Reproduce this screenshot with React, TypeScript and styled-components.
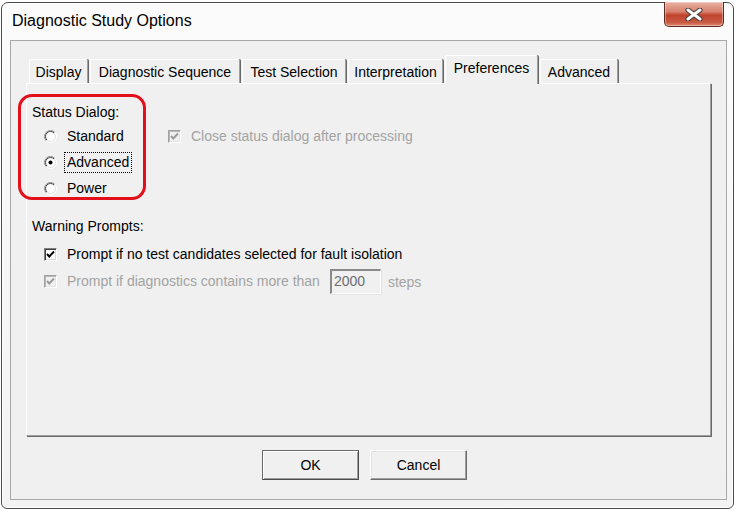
import React from "react";
import styled, { createGlobalStyle } from "styled-components";

const GlobalStyle = createGlobalStyle`
  html, body {
    margin: 0;
    padding: 0;
    background: #ffffff;
  }
  body {
    font-family: "Liberation Sans", Arial, sans-serif;
    font-size: 14px;
    color: #000;
  }
`;

const Page = styled.div`
  width: 736px;
  height: 510px;
  padding: 2px 0 0 1px;
  box-sizing: border-box;
`;

const Window = styled.div`
  position: relative;
  width: 733px;
  height: 507px;
  box-sizing: border-box;
  border: 1px solid #4a4a4a;
  border-radius: 7px 7px 6px 6px;
  background: linear-gradient(#fbfbfb, #f3f3f3);
  box-shadow: inset 0 0 0 1px #ffffff;
  padding: 0 6px 8px 8px;
  display: flex;
  flex-direction: column;
`;

const TitleBar = styled.div`
  height: 37px;
  display: flex;
  align-items: flex-start;
  justify-content: space-between;
`;

const Title = styled.div`
  font-family: "Liberation Sans", Arial, sans-serif;
  font-size: 16px;
  line-height: 20px;
  margin-top: 8px;
  margin-left: 2px;
  color: #000;
`;

const CloseButton = styled.div`
  width: 60px;
  height: 25px;
  margin-top: -1px;
  margin-right: 3px;
  box-sizing: border-box;
  border: 1px solid #5e2a22;
  border-top: none;
  border-radius: 0 0 5px 5px;
  background: linear-gradient(#eab1a3 0%, #d8816e 40%, #c0432c 55%, #c85a44 85%, #dd8a72 100%);
  box-shadow: inset 0 0 0 1px rgba(255, 255, 255, 0.35);
  display: flex;
  align-items: center;
  justify-content: center;
`;

const Client = styled.div`
  flex: 1;
  border: 1px solid #a8a8a8;
  background: #f0f0f0;
  padding: 15px 14px 17px 15px;
  display: flex;
  flex-direction: column;
`;

const TabStrip = styled.div`
  height: 28px;
  display: flex;
  align-items: flex-end;
  padding-left: 3px;
  position: relative;
  z-index: 1;
  margin-bottom: -1px;
`;

const Tab = styled.div<{ $active?: boolean; $width: number }>`
  box-sizing: border-box;
  width: ${(p) => p.$width}px;
  height: ${(p) => (p.$active ? "29px" : "24px")};
  padding-bottom: ${(p) => (p.$active ? "4px" : "0")};
  margin: ${(p) => (p.$active ? "0 2px 0 0" : "0 2px 1px 0")};
  display: flex;
  align-items: center;
  justify-content: center;
  background: #f0f0f0;
  border-top: 1px solid #ffffff;
  border-left: 1px solid #ffffff;
  border-right: 1px solid #a0a0a0;
  box-shadow: 1px 0 0 #696969;
  border-radius: 2px 2px 0 0;
  white-space: nowrap;
  font-size: 14px;
  color: #000;
`;

const Panel = styled.div`
  position: relative;
  height: 353px;
  box-sizing: border-box;
  border-top: 1px solid #ffffff;
  border-left: 1px solid #ffffff;
  border-right: 1px solid #a0a0a0;
  border-bottom: 1px solid #a0a0a0;
  box-shadow: 1px 1px 0 #696969;
  margin-right: 1px;
  padding: 18px 0 0 5px;
`;

const Annotation = styled.div`
  position: absolute;
  left: -9px;
  top: 10px;
  width: 128px;
  height: 106px;
  box-sizing: border-box;
  border: 3px solid #e3101a;
  border-radius: 14px;
  pointer-events: none;
`;

const TopSection = styled.div`
  display: flex;
`;

const GroupColumn = styled.div<{ $width?: number }>`
  display: flex;
  flex-direction: column;
  width: ${(p) => (p.$width ? `${p.$width}px` : "auto")};
`;

const GroupLabel = styled.div<{ $gap?: number; $after?: number }>`
  height: 20px;
  line-height: 20px;
  margin-top: ${(p) => p.$gap ?? 0}px;
  margin-bottom: ${(p) => p.$after ?? 1}px;
  color: #000;
`;

const OptionRow = styled.div<{ $disabled?: boolean; $indent?: number; $h?: number }>`
  height: ${(p) => p.$h ?? 26}px;
  display: flex;
  align-items: center;
  padding-left: ${(p) => p.$indent ?? 0}px;
  color: ${(p) => (p.$disabled ? "#a3a3a3" : "#000")};
  white-space: nowrap;
`;

const OptionText = styled.span<{ $focused?: boolean }>`
  margin-left: 8px;
  padding: 0 2px;
  line-height: 19px;
  outline: ${(p) => (p.$focused ? "1px dotted #000" : "none")};
  outline-offset: 0;
`;

const Spacer = styled.div<{ $h: number }>`
  height: ${(p) => p.$h}px;
`;

const CheckBoxBox = styled.span<{ $disabled?: boolean }>`
  width: 13px;
  height: 13px;
  box-sizing: border-box;
  flex: none;
  margin-left: 2px;
  border-style: solid;
  border-width: 1px;
  border-color: ${(p) =>
    p.$disabled ? "#a0a0a0 #ffffff #ffffff #a0a0a0" : "#808080 #ffffff #ffffff #808080"};
  box-shadow: ${(p) =>
    p.$disabled
      ? "inset 1px 1px 0 #b8b8b8, inset -1px -1px 0 #e4e4e4"
      : "inset 1px 1px 0 #404040, inset -1px -1px 0 #d8d8d8"};
  background: ${(p) => (p.$disabled ? "#f0f0f0" : "#ffffff")};
  display: flex;
  align-items: center;
  justify-content: center;
`;

const NumberBox = styled.div`
  width: 51px;
  height: 25px;
  box-sizing: border-box;
  margin: 0 7px 0 8px;
  border-style: solid;
  border-width: 2px 1px 1px 2px;
  border-color: #8a8a8a #ffffff #ffffff #8a8a8a;
  box-shadow: 1px 1px 0 #e3e3e3;
  background: #f0f0f0;
  color: #6d6d6d;
  padding-left: 2px;
  line-height: 21px;
  font-size: 14px;
`;

const ButtonRow = styled.div`
  margin-top: 14px;
  display: flex;
  justify-content: center;
  gap: 11px;
  padding-right: 9px;
`;

const Button = styled.div<{ $default?: boolean }>`
  width: 97px;
  height: 30px;
  box-sizing: border-box;
  display: flex;
  align-items: center;
  justify-content: center;
  font-size: 14px;
  color: #000;
  background: #f0f0f0;
  border-style: solid;
  border-width: 1px;
  border-color: ${(p) =>
    p.$default ? "#6a6a6a #4a4a4a #4a4a4a #6a6a6a" : "#ffffff #6a6a6a #6a6a6a #ffffff"};
  box-shadow: ${(p) =>
    p.$default
      ? "inset 1px 1px 0 #ffffff, inset -1px -1px 0 #a0a0a0"
      : "inset -1px -1px 0 #a0a0a0, inset 1px 1px 0 #e3e3e3"};
`;

const Radio: React.FC<{ checked?: boolean }> = ({ checked }) => (
  <svg width="13" height="13" viewBox="0 0 13 13" style={{ flex: "none" }}>
    <defs>
      <linearGradient id="ro" x1="0" y1="0" x2="1" y2="1">
        <stop offset="0.45" stopColor="#8a8a8a" />
        <stop offset="0.55" stopColor="#ffffff" />
      </linearGradient>
      <linearGradient id="ri" x1="0" y1="0" x2="1" y2="1">
        <stop offset="0.45" stopColor="#404040" />
        <stop offset="0.55" stopColor="#dcdcdc" />
      </linearGradient>
    </defs>
    <circle cx="6.5" cy="6.5" r="6" fill="#ffffff" stroke="url(#ro)" strokeWidth="1" />
    <circle cx="6.5" cy="6.5" r="5" fill="#ffffff" stroke="url(#ri)" strokeWidth="1" />
    {checked && <circle cx="6.5" cy="6.5" r="2" fill="#000" />}
  </svg>
);

const CheckBox: React.FC<{ disabled?: boolean }> = ({ disabled }) => (
  <CheckBoxBox $disabled={disabled}>
    <svg width="9" height="9" viewBox="0 0 9 9">
      <path
        d="M1 4 L3.3 6.5 L8 1.5"
        fill="none"
        stroke={disabled ? "#9a9a9a" : "#000"}
        strokeWidth="1.9"
      />
    </svg>
  </CheckBoxBox>
);

const CloseGlyph: React.FC = () => (
  <svg width="20" height="13" viewBox="0 0 20 13">
    <path d="M4 2 L16 11 M16 2 L4 11" stroke="#3a3a3a" strokeWidth="5" strokeLinecap="round" />
    <path d="M4 2 L16 11 M16 2 L4 11" stroke="#ffffff" strokeWidth="3" strokeLinecap="round" />
  </svg>
);

const tabs = [
  { label: "Display", width: 59 },
  { label: "Diagnostic Sequence", width: 150 },
  { label: "Test Selection", width: 104 },
  { label: "Interpretation", width: 95 },
  { label: "Preferences", width: 93 },
  { label: "Advanced", width: 78 },
];

export default function App() {
  return (
    <Page>
      <GlobalStyle />
      <Window>
        <TitleBar>
          <Title>Diagnostic Study Options</Title>
          <CloseButton>
            <CloseGlyph />
          </CloseButton>
        </TitleBar>
        <Client>
          <TabStrip>
            {tabs.map((t) => (
              <Tab key={t.label} $width={t.width} $active={t.label === "Preferences"}>
                {t.label}
              </Tab>
            ))}
          </TabStrip>
          <Panel>
            <TopSection>
              <GroupColumn $width={134}>
                <GroupLabel>Status Dialog:</GroupLabel>
                <OptionRow $indent={12}>
                  <Radio />
                  <OptionText>Standard</OptionText>
                </OptionRow>
                <OptionRow $indent={12}>
                  <Radio checked />
                  <OptionText $focused>Advanced</OptionText>
                </OptionRow>
                <OptionRow $indent={12}>
                  <Radio />
                  <OptionText>Power</OptionText>
                </OptionRow>
              </GroupColumn>
              <GroupColumn>
                <Spacer $h={21} />
                <OptionRow $disabled>
                  <CheckBox disabled />
                  <OptionText>Close status dialog after processing</OptionText>
                </OptionRow>
              </GroupColumn>
            </TopSection>
            <GroupLabel $gap={15} $after={5}>Warning Prompts:</GroupLabel>
            <OptionRow $indent={10} $h={27}>
              <CheckBox />
              <OptionText>Prompt if no test candidates selected for fault isolation</OptionText>
            </OptionRow>
            <OptionRow $indent={10} $h={27} $disabled>
              <CheckBox disabled />
              <OptionText>Prompt if diagnostics contains more than</OptionText>
              <NumberBox>2000</NumberBox>
              <span>steps</span>
            </OptionRow>
            <Annotation />
          </Panel>
          <ButtonRow>
            <Button $default>OK</Button>
            <Button>Cancel</Button>
          </ButtonRow>
        </Client>
      </Window>
    </Page>
  );
}
